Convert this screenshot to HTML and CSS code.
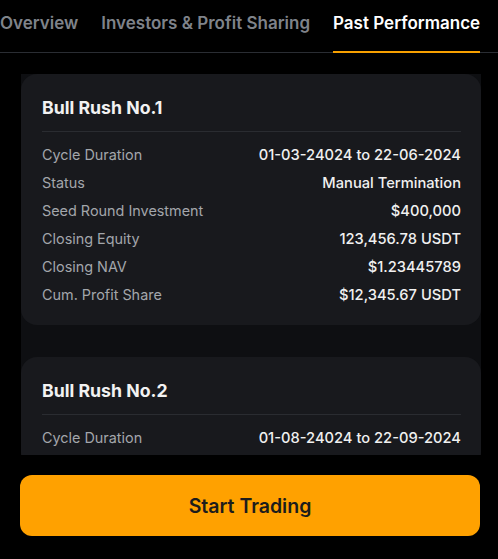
FILE: index.html
```html
<!DOCTYPE html>
<html lang="en">
<head>
    <meta charset="UTF-8">
    <meta name="viewport" content="width=device-width, initial-scale=1.0">
    <link rel="stylesheet" href="styles.css">
</head>
<body>
    <div class="tabs">
        <div class="tab">Overview</div>
        <div class="tab">Investors &amp; Profit Sharing</div>
        <div class="tab active">Past Performance</div>
    </div>

    <div class="panel">
        <div class="card">
            <div class="card-title">Bull Rush No.1</div>
            <div class="rows">
                <div class="row"><span class="label">Cycle Duration</span><span class="value">01-03-24024 to 22-06-2024</span></div>
                <div class="row"><span class="label">Status</span><span class="value">Manual Termination</span></div>
                <div class="row"><span class="label">Seed Round Investment</span><span class="value">$400,000</span></div>
                <div class="row"><span class="label">Closing Equity</span><span class="value">123,456.78 USDT</span></div>
                <div class="row"><span class="label">Closing NAV</span><span class="value">$1.23445789</span></div>
                <div class="row"><span class="label">Cum. Profit Share</span><span class="value">$12,345.67 USDT</span></div>
            </div>
        </div>
        <div class="card">
            <div class="card-title">Bull Rush No.2</div>
            <div class="rows">
                <div class="row"><span class="label">Cycle Duration</span><span class="value">01-08-24024 to 22-09-2024</span></div>
            </div>
        </div>
    </div>

    <button class="start-btn">Start Trading</button>
</body>
</html>
```

FILE: styles.css
```css
body {
    margin: 0;
    background: #000;
    font-family: Inter, "Noto Sans", sans-serif;
    width: 498px;
    height: 559px;
    overflow: hidden;
}
.tabs {
    display: flex;
    gap: 23px;
    height: 52px;
    border-bottom: 1px solid #2a2d33;
    white-space: nowrap;
}
.tab {
    font-size: 17px;
    font-weight: 600;
    color: #7f838a;
    line-height: 47px;
    height: 51px;
}
.tab.active {
    color: #fff;
    border-bottom: 2px solid #f7a000;
}
.panel {
    margin: 21px 17px 0 21px;
    height: 381px;
    background: #0e0f12;
    overflow: hidden;
}
.card {
    background: #18191d;
    border-radius: 16px;
    padding: 0 20px 0 21px;
    margin-bottom: 32px;
}
.card-title {
    font-size: 17.7px;
    font-weight: 700;
    color: #f2f2f2;
    line-height: 24px;
    padding: 22px 0 11px;
    border-bottom: 1px solid #2a2c31;
}
.rows {
    padding: 9px 0 16px;
}
.row {
    display: flex;
    justify-content: space-between;
    line-height: 28px;
    height: 28px;
}
.label {
    color: #a3a6ab;
    font-size: 14.4px;
}
.value {
    color: #f0f0f0;
    font-size: 14.7px;
    font-weight: 500;
}
.start-btn {
    display: block;
    margin: 20px 18px 0 20px;
    width: 460px;
    height: 61px;
    border: none;
    border-radius: 12px;
    background: #ffa100;
    color: #1c1c1c;
    font-family: inherit;
    font-size: 19.5px;
    font-weight: 600;
}
```
